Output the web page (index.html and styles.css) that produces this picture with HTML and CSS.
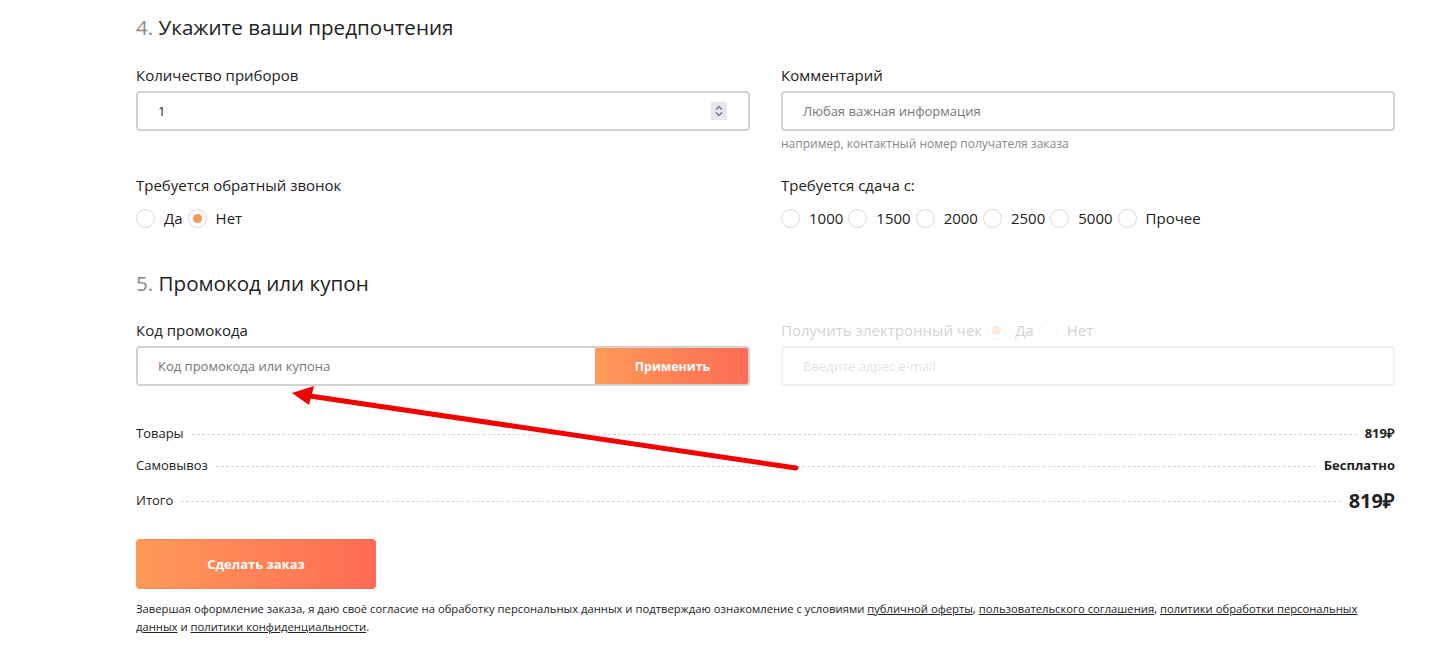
FILE: index.html
```html
<!DOCTYPE html>
<html lang="ru">
<head>
<meta charset="utf-8">
<link rel="stylesheet" href="styles.css">
</head>
<body>
<div class="page">
  <h2 class="section-title"><span class="num">4.</span> Укажите ваши предпочтения</h2>
  <div class="grid">
    <div class="field tall">
      <div class="label">Количество приборов</div>
      <div class="input">
        <span class="value">1</span>
        <span class="spinner">
          <svg width="12" height="16" viewBox="0 0 12 16"><path d="M3 6.5 6 3.5 9 6.5M3 9.5 6 12.5 9 9.5" fill="none" stroke="#666" stroke-width="1.1"/></svg>
        </span>
      </div>
    </div>
    <div class="field tall">
      <div class="label">Комментарий</div>
      <div class="input"><span class="placeholder">Любая важная информация</span></div>
      <div class="hint">например, контактный номер получателя заказа</div>
    </div>
    <div class="field">
      <div class="label">Требуется обратный звонок</div>
      <div class="radios">
        <span class="radio"></span><span class="rlabel">Да</span>
        <span class="radio checked"></span><span class="rlabel">Нет</span>
      </div>
    </div>
    <div class="field">
      <div class="label">Требуется сдача с:</div>
      <div class="radios">
        <span class="radio"></span><span class="rlabel">1000</span>
        <span class="radio"></span><span class="rlabel">1500</span>
        <span class="radio"></span><span class="rlabel">2000</span>
        <span class="radio"></span><span class="rlabel">2500</span>
        <span class="radio"></span><span class="rlabel">5000</span>
        <span class="radio"></span><span class="rlabel">Прочее</span>
      </div>
    </div>
  </div>

  <h2 class="section-title second"><span class="num">5.</span> Промокод или купон</h2>
  <div class="grid promo-grid">
    <div class="field">
      <div class="label">Код промокода</div>
      <div class="input promo">
        <span class="placeholder">Код промокода или купона</span>
        <span class="apply">Применить</span>
      </div>
    </div>
    <div class="field faded">
      <div class="label check-line">Получить электронный чек <span class="radio checked"></span><span class="rlabel">Да</span><span class="radio"></span><span class="rlabel">Нет</span></div>
      <div class="input light"><span class="placeholder">Введите адрес e-mail</span></div>
    </div>
  </div>

  <div class="totals">
    <div class="row"><span class="name">Товары</span><span class="dots"></span><span class="val">819₽</span></div>
    <div class="row"><span class="name">Самовывоз</span><span class="dots"></span><span class="val">Бесплатно</span></div>
    <div class="row total"><span class="name">Итого</span><span class="dots"></span><span class="val">819₽</span></div>
  </div>

  <button class="order">Сделать заказ</button>

  <p class="agree">Завершая оформление заказа, я даю своё согласие на обработку персональных данных и подтверждаю ознакомление с условиями <a>публичной оферты</a>, <a>пользовательского соглашения</a>, <a>политики обработки персональных данных</a> и <a>политики конфиденциальности</a>.</p>
</div>
<svg class="arrow" width="1434" height="646" viewBox="0 0 1434 646">
  <line x1="796" y1="468" x2="310" y2="396" stroke="#f50000" stroke-width="5" stroke-linecap="round"/>
  <polygon points="292,393 314,386 309,405" fill="#f50000"/>
</svg>
</body>
</html>
```
FILE: styles.css
```css
* { box-sizing: border-box; }
html, body { margin: 0; background: #fff; }
body {
  font-family: "Open Sans", "Liberation Sans", sans-serif;
  color: #222;
  position: relative;
  width: 1434px;
  height: 646px;
  overflow: hidden;
}
.page {
  width: 1259px;
  margin-left: 136px;
  padding-top: 12px;
}
.section-title {
  margin: 0;
  font-size: 20.6px;
  font-weight: 400;
  line-height: 30px;
  color: #222;
}
.section-title .num { color: #888; }
.section-title.second { margin-top: 40px; }
.grid {
  display: grid;
  grid-template-columns: 614px 614px;
  column-gap: 31px;
  margin-top: 23px;
}
.promo-grid { margin-top: 22px; }
.field.tall { min-height: 110px; }
.label {
  font-size: 15px;
  line-height: 20px;
  margin-bottom: 6px;
  color: #222;
}
.input {
  height: 40px;
  border: 2px solid #d2d2d2;
  border-radius: 4px;
  display: flex;
  align-items: center;
  padding-left: 20px;
  font-size: 13px;
}
.promo-grid .input { margin-top: 1px; }
.value { color: #222; flex: 1; }
.placeholder { color: #777; flex: 1; }
.spinner {
  width: 16px;
  height: 18px;
  background: #e6e6ef;
  display: flex;
  align-items: center;
  justify-content: center;
  margin-right: 21px;
}
.hint {
  font-size: 12px;
  color: #888;
  margin-top: 4px;
  line-height: 17px;
}
.radios {
  display: flex;
  align-items: center;
  font-size: 15px;
  height: 20px;
  margin-top: 13px;
}
.check-line {
  display: flex;
  align-items: center;
}
.radio {
  width: 19px;
  height: 19px;
  border: 1px solid #d8d8d8;
  border-radius: 50%;
  display: inline-flex;
  align-items: center;
  justify-content: center;
  margin-right: 9px;
  flex: none;
}
.radio.checked::after {
  content: "";
  width: 9px;
  height: 9px;
  border-radius: 50%;
  background: #f7955a;
}
.rlabel { margin-right: 5px; }
.check-line .radio:first-of-type { margin-left: 5px; }
.promo {
  padding-right: 0;
  overflow: hidden;
}
.apply {
  align-self: stretch;
  margin: -2px -2px -2px 0;
  width: 155px;
  background: linear-gradient(90deg, #ff9a57, #ff6b55);
  color: #fff;
  font-weight: 700;
  font-size: 12.4px;
  display: flex;
  align-items: center;
  justify-content: center;
  border-radius: 0 4px 4px 0;
}
.faded { opacity: 0.2; }
.input.light { border-color: #bbb; }
.totals { margin-top: 31px; font-size: 13px; }
.row {
  display: flex;
  align-items: center;
  height: 32px;
}
.row .dots {
  flex: 1;
  border-top: 1px dashed #d6d6d6;
  margin: 2px 8px 0 8px;
}
.row .val { font-weight: 700; }
.row.total { height: 38px; }
.row.total .val { font-size: 20px; }
.order {
  display: block;
  margin-top: 20px;
  width: 240px;
  height: 50px;
  border: none;
  border-radius: 4px;
  background: linear-gradient(90deg, #ff9a57, #ff6b55);
  color: #fff;
  font-family: inherit;
  font-weight: 700;
  font-size: 13px;
}
.agree {
  margin: 11px 0 0;
  font-size: 11.25px;
  line-height: 18px;
  color: #222;
  width: 1240px;
}
.agree a { text-decoration: underline; color: #222; }
.arrow {
  position: absolute;
  left: 0;
  top: 0;
  pointer-events: none;
}
```
